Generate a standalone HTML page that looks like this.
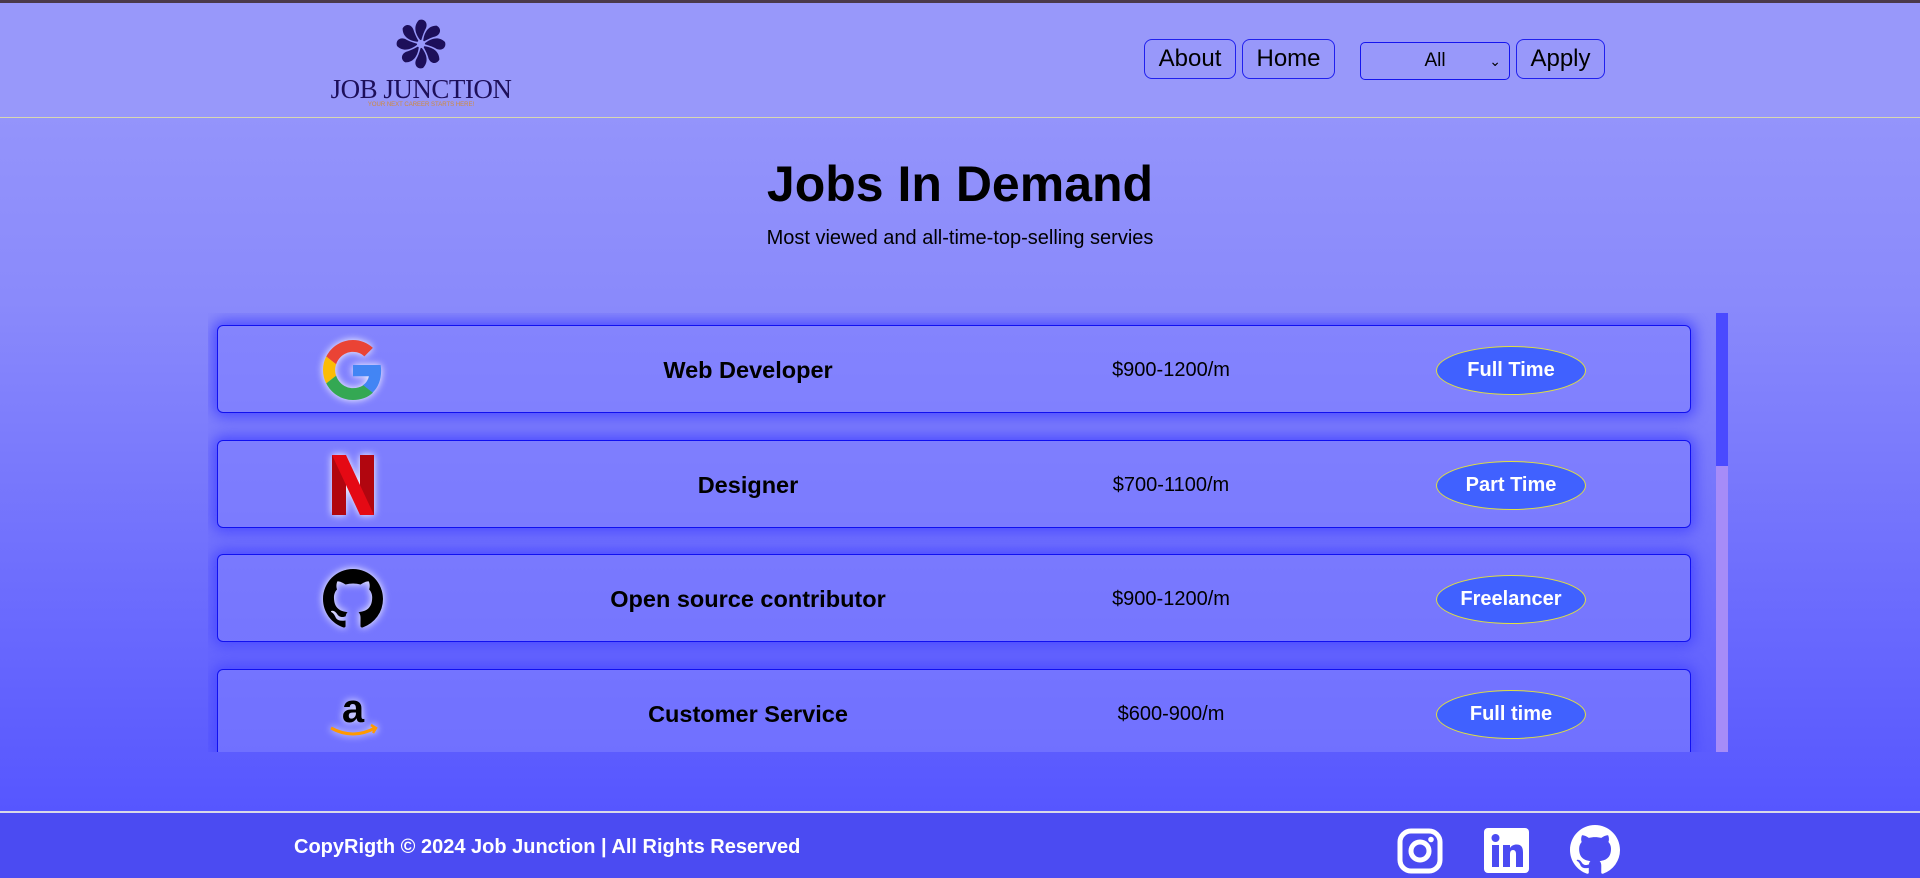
<!DOCTYPE html>
<html><head><meta charset="utf-8"><style>
*{box-sizing:border-box;margin:0;padding:0}
body{width:1920px;height:878px;overflow:hidden;font-family:"Liberation Sans",Arial,sans-serif;background:linear-gradient(180deg,#9a9afb 0px,#8a8afb 300px,#5656ff 812px);position:relative}
.topline{position:absolute;left:0;top:0;width:1920px;height:3px;background:#4a3a4a}
header{position:absolute;left:0;top:3px;width:1920px;height:115px;background:#9898fa;border-bottom:1px solid #d8d8b0}
.logo{position:absolute;left:330px;top:15px;width:182px;text-align:center}
.logo .t{font-family:"Liberation Serif",serif;font-size:27px;color:#1d0f5a;letter-spacing:-0.5px;line-height:24px;margin-top:2px}
.logo .s{font-size:6px;color:#d08a3a;line-height:8px}
.btn{position:absolute;top:36px;height:40px;border:1px solid #2020ee;border-radius:8px;font-size:24px;line-height:38px;text-align:center;color:#000}
.sel{position:absolute;left:1360px;top:39px;width:150px;height:38px;border:1px solid #1515ee;border-radius:5px;font-size:19px;line-height:36px;text-align:center}
h1{position:absolute;left:0;width:1920px;top:155px;text-align:center;font-size:50px;font-weight:bold}
.sub{position:absolute;left:0;width:1920px;top:227px;text-align:center;font-size:20px}
.scroll{position:absolute;left:208px;top:313px;width:1520px;height:439px;overflow:hidden}
.track{position:absolute;left:1716px;top:313px;width:12px;height:439px;background:#a68cf8}
.thumb{position:absolute;left:1716px;top:313px;width:12px;height:153px;background:#4a4aff}
.card{position:absolute;left:9px;width:1474px;height:88px;border:1px solid #1010f0;border-radius:6px;background:rgba(130,130,255,0.55);box-shadow:0 0 14px 4px #4a4aff}
.card .ic{position:absolute;left:105px;top:14px;width:60px;height:60px;filter:drop-shadow(0 0 4px #fff)}
.card .ti{position:absolute;left:310px;width:440px;text-align:center;top:31px;font-size:23.5px;font-weight:bold}
.card .pr{position:absolute;left:853px;width:200px;text-align:center;top:33px;font-size:20px}
.card .bd{position:absolute;left:1218px;top:20px;width:150px;height:49px;border-radius:50%;background:#4061ff;border:1px solid #e0e040;color:#fff;font-weight:bold;font-size:20px;line-height:47px;text-align:center}
footer{position:absolute;left:0;top:811px;width:1920px;height:67px;background:#4b4bf2;border-top:2px solid #d8d8e8}
footer .c{position:absolute;left:294px;top:23px;color:#fff;font-weight:bold;font-size:20px}
</style></head><body>
<div class="topline"></div>
<header>
<div class="logo">
<svg width="56" height="52" viewBox="-28 -26 56 52"><g fill="#1d0f5a">
<g id="p"><path d="M0-3 C-6-10 -8-18 -2-24 C4-26 8-20 4-14 C2-10 1-6 0-3Z"/></g>
<use href="#p" transform="rotate(45)"/><use href="#p" transform="rotate(90)"/><use href="#p" transform="rotate(135)"/><use href="#p" transform="rotate(180)"/><use href="#p" transform="rotate(225)"/><use href="#p" transform="rotate(270)"/><use href="#p" transform="rotate(315)"/></g>
<circle r="4" fill="#9898fa"/></svg>
<div class="t">JOB JUNCTION</div>
<div class="s">YOUR NEXT CAREER STARTS HERE!</div>
</div>
<div class="btn" style="left:1144px;width:92px">About</div>
<div class="btn" style="left:1242px;width:93px">Home</div>
<div class="sel">All<span style="position:absolute;right:8px;top:0;font-size:14px">&#8964;</span></div>
<div class="btn" style="left:1516px;width:89px">Apply</div>
</header>
<h1>Jobs In Demand</h1>
<div class="sub">Most viewed and all-time-top-selling servies</div>
<div class="track"></div><div class="thumb"></div>
<div class="scroll">
<div class="card" style="top:12px">
<svg class="ic" viewBox="0 0 48 48"><path fill="#EA4335" d="M24 9.5c3.5 0 6.6 1.2 9.1 3.6l6.8-6.8C35.8 2.4 30.2 0 24 0 14.6 0 6.6 5.4 2.6 13.3l7.9 6.2C12.4 13.7 17.7 9.5 24 9.5z"/><path fill="#4285F4" d="M46.5 24.5c0-1.6-.2-3.1-.4-4.5H24v9h12.7c-.6 3-2.300 5.5-4.8 7.2l7.7 6C44.1 38 46.5 31.8 46.5 24.5z"/><path fill="#FBBC05" d="M10.5 28.6c-.5-1.4-.8-3-.8-4.6s.3-3.2.8-4.6l-7.9-6.2C.9 16.5 0 20.1 0 24s.9 7.5 2.6 10.8l7.9-6.2z"/><path fill="#34A853" d="M24 48c6.5 0 11.9-2.1 15.9-5.8l-7.7-6c-2.2 1.5-5 2.3-8.2 2.300-6.3 0-11.6-4.2-13.5-10l-7.9 6.2C6.6 42.6 14.6 48 24 48z"/></svg>
<div class="ti">Web Developer</div><div class="pr">$900-1200/m</div><div class="bd">Full Time</div></div>
<div class="card" style="top:127px">
<svg class="ic" viewBox="0 0 60 60"><path fill="#b1060f" d="M9 0h14v60H9z"/><path fill="#b1060f" d="M37 0h14v60H37z"/><path fill="#e50914" d="M9 0h14l28 60H37z"/></svg>
<div class="ti">Designer</div><div class="pr">$700-1100/m</div><div class="bd">Part Time</div></div>
<div class="card" style="top:241px">
<svg class="ic" viewBox="0 0 16 16"><path fill="#000" d="M8 0C3.58 0 0 3.580 0 8c0 3.54 2.29 6.53 5.47 7.59.4.07.55-.17.55-.38 0-.19-.01-.82-.01-1.49-2.010.37-2.53-.49-2.69-.94-.09-.23-.48-.94-.82-1.13-.28-.15-.68-.52-.01-.53.63-.01 1.08.58 1.23.82.72 1.21 1.87.87 2.33.66.07-.52.28-.87.51-1.07-1.78-.2-3.64-.89-3.64-3.95 0-.87.31-1.59.82-2.15-.08-.2-.36-1.02.08-2.12 0 0 .67-.21 2.2.82.64-.18 1.32-.27 2-.27.68 0 1.36.09 2 .27 1.53-1.04 2.2-.82 2.2-.82.44 1.1.16 1.92.08 2.12.51.56.82 1.27.82 2.15 0 3.07-1.87 3.75-3.65 3.95.29.25.54.73.54 1.48 0 1.07-.01 1.93-.01 2.2 0 .21.15.46.55.38A8.013 8.013 0 0016 8c0-4.42-3.58-8-8-8z"/></svg>
<div class="ti">Open source contributor</div><div class="pr">$900-1200/m</div><div class="bd">Freelancer</div></div>
<div class="card" style="top:356px">
<svg class="ic" viewBox="0 0 60 60"><text x="30" y="38" text-anchor="middle" font-family="Liberation Sans" font-weight="bold" font-size="40" fill="#000">a</text><path d="M8 44 Q30 56 52 44" stroke="#ff9900" stroke-width="3" fill="none"/><path d="M48 41l5 3-3 5" stroke="#ff9900" stroke-width="2.5" fill="none"/></svg>
<div class="ti">Customer Service</div><div class="pr">$600-900/m</div><div class="bd">Full time</div></div>
</div>
<footer>
<div class="c">CopyRigth © 2024 Job Junction | All Rights Reserved</div>
<svg style="position:absolute;left:1397px;top:15px" width="46" height="46" viewBox="0 0 46 46"><rect x="3" y="3" width="40" height="40" rx="11" fill="none" stroke="#fff" stroke-width="5"/><circle cx="23" cy="23" r="9" fill="none" stroke="#fff" stroke-width="5"/><circle cx="34" cy="11.5" r="2.8" fill="#fff"/></svg>
<svg style="position:absolute;left:1484px;top:15px" width="45" height="45" viewBox="0 0 45 45"><rect width="45" height="45" rx="4" fill="#fff"/><rect x="8" y="17" width="7" height="22" fill="#4b4bf2"/><circle cx="11.5" cy="10" r="4" fill="#4b4bf2"/><path d="M19 17h7v3c1.5-2.5 4-3.5 6.5-3.5 5 0 6.5 3 6.5 8V39h-7V26c0-2.5-1-4-3-4s-3 1.5-3 4v13h-7z" fill="#4b4bf2"/></svg>
<svg style="position:absolute;left:1570px;top:12px" width="50" height="50" viewBox="0 0 16 16"><path fill="#fff" d="M8 0C3.58 0 0 3.58 0 8c0 3.54 2.29 6.53 5.47 7.59.4.07.55-.17.55-.38 0-.19-.01-.82-.01-1.49-2.01.37-2.53-.49-2.69-.94-.09-.23-.48-.94-.82-1.13-.28-.15-.68-.52-.01-.53.63-.01 1.08.58 1.23.82.72 1.21 1.87.87 2.33.66.07-.52.28-.87.51-1.07-1.78-.2-3.64-.89-3.64-3.95 0-.87.31-1.59.82-2.15-.08-.2-.36-1.02.08-2.12 0 0 .67-.21 2.2.82.64-.18 1.32-.27 2-.27.68 0 1.36.09 2 .27 1.53-1.04 2.2-.82 2.2-.82.44 1.1.16 1.92.08 2.12.51.56.82 1.27.82 2.15 0 3.07-1.87 3.75-3.65 3.95.29.25.54.73.54 1.48 0 1.07-.01 1.93-.01 2.2 0 .21.15.46.55.38A8.013 8.013 0 0016 8c0-4.42-3.58-8-8-8z"/></svg>
</footer>
</body></html>
